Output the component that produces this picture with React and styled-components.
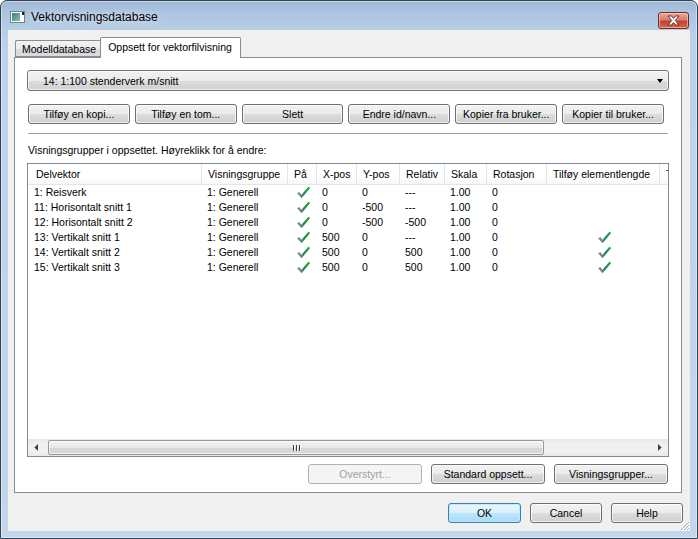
import styled, { createGlobalStyle } from "styled-components";

const GlobalStyle = createGlobalStyle`
  html, body {
    margin: 0;
    padding: 0;
    background: #ffffff;
  }
  body {
    font-family: "Liberation Sans", Arial, sans-serif;
    font-size: 10.5px;
    color: #000;
  }
  * {
    box-sizing: border-box;
  }
`;

const columns = [
  { title: "Delvektor", width: 174 },
  { title: "Visningsgruppe", width: 86 },
  { title: "På", width: 29 },
  { title: "X-pos", width: 40 },
  { title: "Y-pos", width: 43 },
  { title: "Relativ", width: 45 },
  { title: "Skala", width: 42 },
  { title: "Rotasjon", width: 60 },
  { title: "Tilføy elementlengde", width: 113 },
  { title: "T", width: 80 },
];

const rows = [
  ["1: Reisverk", "1: Generell", true, "0", "0", "---", "1.00", "0", false],
  ["11: Horisontalt snitt 1", "1: Generell", true, "0", "-500", "---", "1.00", "0", false],
  ["12: Horisontalt snitt 2", "1: Generell", true, "0", "-500", "-500", "1.00", "0", false],
  ["13: Vertikalt snitt 1", "1: Generell", true, "500", "0", "---", "1.00", "0", true],
  ["14: Vertikalt snitt 2", "1: Generell", true, "500", "0", "500", "1.00", "0", true],
  ["15: Vertikalt snitt 3", "1: Generell", true, "500", "0", "500", "1.00", "0", true],
];

const template = columns.map((c) => `${c.width}px`).join(" ");

const CheckIcon = () => (
  <svg width="15" height="13" viewBox="0 0 15 13">
    <defs>
      <linearGradient id="chk" x1="0" y1="0" x2="1" y2="0">
        <stop offset="0" stopColor="#929292" />
        <stop offset="0.38" stopColor="#6f7f79" />
        <stop offset="0.52" stopColor="#1f8a5a" />
        <stop offset="1" stopColor="#22b22e" />
      </linearGradient>
    </defs>
    <path d="M1 7.2 L3.3 6 L5.4 8.8 L12.4 0.8 L14.2 1.9 L5.6 12.2 Z" fill="url(#chk)" />
  </svg>
);

const WindowIcon = () => (
  <svg width="15" height="13" viewBox="0 0 15 13">
    <defs>
      <linearGradient id="wic" x1="0" y1="0" x2="1" y2="1">
        <stop offset="0" stopColor="#2f7f95" />
        <stop offset="1" stopColor="#8cc69a" />
      </linearGradient>
    </defs>
    <rect x="0.5" y="1.5" width="14" height="11" fill="#fff" stroke="#74808e" />
    <rect x="2" y="3" width="8" height="8" fill="url(#wic)" />
    <rect x="12" y="2" width="2" height="3" fill="#222" />
  </svg>
);

const CloseGlyph = () => (
  <svg width="13" height="11" viewBox="0 0 13 11">
    <path
      d="M1 1 H4.5 L6.5 3.4 L8.5 1 H12 L8.3 5.5 L12 10 H8.5 L6.5 7.6 L4.5 10 H1 L4.7 5.5 Z"
      fill="#ffffff"
      stroke="#5e2019"
      strokeWidth="0.9"
      strokeLinejoin="round"
    />
  </svg>
);

const Grip = () => (
  <svg width="11" height="11" viewBox="0 0 11 11">
    <path d="M10 2 L2 10 M10 5 L5 10 M10 8 L8 10" stroke="#a9adb3" strokeWidth="1" />
    <path d="M11 3 L3 11 M11 6 L6 11 M11 9 L9 11" stroke="#ffffff" strokeWidth="1" />
  </svg>
);

const Arrow = ({ dir }) => (
  <svg width="5" height="7" viewBox="0 0 5 7">
    {dir === "left" ? (
      <path d="M4 0 L0.5 3.5 L4 7 Z" fill="#3c3c3c" />
    ) : (
      <path d="M1 0 L4.5 3.5 L1 7 Z" fill="#3c3c3c" />
    )}
  </svg>
);

export default function App() {
  return (
    <>
      <GlobalStyle />
      <Window>
        <TitleBar>
          <WindowIcon />
          <Title>Vektorvisningsdatabase</Title>
          <CloseButton>
            <CloseGlyph />
          </CloseButton>
        </TitleBar>

        <Client>
          <TabStrip>
            <Tab>Modelldatabase</Tab>
            <Tab $active>Oppsett for vektorfilvisning</Tab>
          </TabStrip>

          <TabPanel>
            <Dropdown>
              <span>14: 1:100 stenderverk m/snitt</span>
              <DropArrow />
            </Dropdown>

            <ButtonRow>
              <Button $grow>Tilføy en kopi...</Button>
              <Button $grow>Tilføy en tom...</Button>
              <Button $grow>Slett</Button>
              <Button $grow>Endre id/navn...</Button>
              <Button $grow>Kopier fra bruker...</Button>
              <Button $grow>Kopier til bruker...</Button>
            </ButtonRow>

            <Separator />

            <Caption>Visningsgrupper i oppsettet. Høyreklikk for å endre:</Caption>

            <ListView>
              <ListViewport>
                <HeaderRow>
                  {columns.map((c, i) => (
                    <HeaderCell key={c.title} $first={i === 0}>
                      {c.title}
                    </HeaderCell>
                  ))}
                </HeaderRow>
                {rows.map((r) => (
                  <Row key={r[0]}>
                    <Cell $first>{r[0]}</Cell>
                    <Cell>{r[1]}</Cell>
                    <IconCell>{r[2] && <CheckIcon />}</IconCell>
                    <Cell>{r[3]}</Cell>
                    <Cell>{r[4]}</Cell>
                    <Cell>{r[5]}</Cell>
                    <Cell>{r[6]}</Cell>
                    <Cell>{r[7]}</Cell>
                    <IconCell>{r[8] && <CheckIcon />}</IconCell>
                    <Cell />
                  </Row>
                ))}
              </ListViewport>
              <HScroll>
                <ScrollArrow>
                  <Arrow dir="left" />
                </ScrollArrow>
                <ScrollTrack>
                  <ScrollThumb>
                    <GripLines>
                      <i />
                      <i />
                      <i />
                    </GripLines>
                  </ScrollThumb>
                </ScrollTrack>
                <ScrollArrow>
                  <Arrow dir="right" />
                </ScrollArrow>
              </HScroll>
            </ListView>

            <PanelFooter>
              <Button $width={114} disabled>
                Overstyrt...
              </Button>
              <Button $width={114}>Standard oppsett...</Button>
              <Button $width={114}>Visningsgrupper...</Button>
            </PanelFooter>
          </TabPanel>

          <DialogFooter>
            <Button $width={73} $default>
              OK
            </Button>
            <Button $width={72}>Cancel</Button>
            <Button $width={72}>Help</Button>
          </DialogFooter>

          <ResizeGrip>
            <Grip />
          </ResizeGrip>
        </Client>
      </Window>
    </>
  );
}

const Window = styled.div`
  width: 698px;
  height: 539px;
  display: flex;
  flex-direction: column;
  padding: 0 7px 7px 7px;
  border: 1px solid #34404e;
  border-radius: 7px 7px 0 0;
  background: linear-gradient(
    180deg,
    #9db8d6 0px,
    #aec6e1 14px,
    #bcd2ea 40px,
    #c2d7ed 100%
  );
  box-shadow: inset 0 0 0 1px rgba(255, 255, 255, 0.45);
`;

const TitleBar = styled.div`
  height: 29px;
  display: flex;
  align-items: center;
  padding: 2px 0 0 2px;
  gap: 6px;
`;

const Title = styled.div`
  flex: 1;
  font-family: "Liberation Sans", Arial, sans-serif;
  font-size: 12px;
  color: #000;
  text-shadow: 0 0 6px rgba(255, 255, 255, 0.9);
  padding-top: 1px;
`;

const CloseButton = styled.div`
  align-self: flex-start;
  margin-top: 9px;
  margin-right: 1px;
  width: 31px;
  height: 17px;
  display: flex;
  align-items: center;
  justify-content: center;
  border: 1px solid #6f2a21;
  border-radius: 3px;
  background: linear-gradient(
    180deg,
    #e8a99c 0%,
    #d77f6f 45%,
    #c4432f 55%,
    #d6664f 100%
  );
  box-shadow: inset 0 0 0 1px rgba(255, 220, 210, 0.55);
`;

const Client = styled.div`
  position: relative;
  flex: 1;
  display: flex;
  flex-direction: column;
  background: #f0f0f0;
  padding: 7px 8px 0 6px;
`;

const TabStrip = styled.div`
  height: 20px;
  display: flex;
  align-items: flex-end;
`;

const Tab = styled.div`
  position: relative;
  z-index: ${(p) => (p.$active ? 2 : 1)};
  height: ${(p) => (p.$active ? "21px" : "17px")};
  margin-bottom: ${(p) => (p.$active ? "-1px" : "0")};
  margin-left: ${(p) => (p.$active ? "-1px" : "1px")};
  padding: ${(p) => (p.$active ? "3px 8px 0 7px" : "2px 5px 0 6px")};
  border: 1px solid #898c95;
  border-bottom: ${(p) => (p.$active ? "none" : "1px solid #898c95")};
  border-right: ${(p) => (p.$active ? "1px solid #898c95" : "none")};
  border-radius: 2px 2px 0 0;
  background: ${(p) =>
    p.$active ? "#ffffff" : "linear-gradient(180deg, #f3f3f3 0%, #ebebeb 50%, #dcdcdc 51%, #d9d9d9 100%)"};
  white-space: nowrap;
  font-size: 10.5px;
`;

const TabPanel = styled.div`
  height: 436px;
  display: flex;
  flex-direction: column;
  background: #ffffff;
  border: 1px solid #898c95;
  padding: 12px 12px 5px 12px;
`;

const Dropdown = styled.div`
  height: 21px;
  display: flex;
  align-items: center;
  justify-content: space-between;
  padding: 0 4px 0 15px;
  border: 1px solid #707070;
  border-radius: 3px;
  background: linear-gradient(
    180deg,
    #f2f2f2 0%,
    #ebebeb 50%,
    #dddddd 51%,
    #cfcfcf 100%
  );
  box-shadow: inset 0 0 0 1px rgba(255, 255, 255, 0.7);
`;

const DropArrow = styled.span`
  width: 0;
  height: 0;
  border-left: 3.5px solid transparent;
  border-right: 3.5px solid transparent;
  border-top: 4px solid #000;
  margin-right: 1px;
`;

const ButtonRow = styled.div`
  display: flex;
  gap: 5px;
  margin: 13px 5px 0 1px;
`;

const Button = styled.button`
  flex: ${(p) => (p.$grow ? "1 1 0" : "none")};
  width: ${(p) => (p.$width ? `${p.$width}px` : "auto")};
  height: 20px;
  padding: 0 2px;
  font-family: "Liberation Sans", Arial, sans-serif;
  font-size: 10.5px;
  color: #000;
  white-space: nowrap;
  border: 1px solid ${(p) => (p.$default ? "#3c7fb1" : "#707070")};
  border-radius: 3px;
  background: ${(p) =>
    p.$default
      ? "linear-gradient(180deg, #eaf6fd 0%, #d9f0fc 50%, #bee6fd 51%, #a7d9f5 100%)"
      : "linear-gradient(180deg, #f2f2f2 0%, #ebebeb 50%, #dddddd 51%, #cfcfcf 100%)"};
  box-shadow: inset 0 0 0 1px
    ${(p) => (p.$default ? "rgba(190, 232, 253, 0.9)" : "rgba(255, 255, 255, 0.7)")};

  &:disabled {
    color: #a0a0a0;
    border-color: #adb2b5;
    background: #f4f4f4;
    box-shadow: none;
  }
`;

const Separator = styled.div`
  height: 1px;
  margin: 9px 1px 0 1px;
  background: #a0a0a0;
`;

const Caption = styled.div`
  margin: 10px 0 0 1px;
  height: 13px;
  line-height: 13px;
`;

const ListView = styled.div`
  margin-top: 6px;
  height: 294px;
  display: flex;
  flex-direction: column;
  border: 1px solid #828790;
  background: #ffffff;
`;

const ListViewport = styled.div`
  flex: 1;
  overflow: hidden;
`;

const HeaderRow = styled.div`
  display: grid;
  grid-template-columns: ${template};
  height: 21px;
  border-bottom: 1px solid #e5e5e5;
  background: linear-gradient(180deg, #ffffff 0%, #ffffff 60%, #f6f7f8 100%);
`;

const HeaderCell = styled.div`
  display: flex;
  align-items: center;
  padding-left: ${(p) => (p.$first ? "8px" : "6px")};
  border-right: 1px solid #e3e5e8;
  white-space: nowrap;
  overflow: hidden;
`;

const Row = styled.div`
  display: grid;
  grid-template-columns: ${template};
  height: 15px;
  line-height: 15px;
`;

const Cell = styled.div`
  padding-left: ${(p) => (p.$first ? "6px" : "5px")};
  white-space: nowrap;
  overflow: hidden;
`;

const IconCell = styled.div`
  display: flex;
  align-items: center;
  justify-content: center;
  padding-left: 2px;
`;

const HScroll = styled.div`
  height: 17px;
  display: flex;
  background: linear-gradient(180deg, #e6e6e6 0%, #f0f0f0 25%, #f0f0f0 75%, #e8e8e8 100%);
`;

const ScrollArrow = styled.div`
  width: 17px;
  display: flex;
  align-items: center;
  justify-content: center;
`;

const ScrollTrack = styled.div`
  flex: 1;
  display: flex;
  align-items: center;
  padding-left: 3px;
`;

const ScrollThumb = styled.div`
  width: 496px;
  height: 15px;
  display: flex;
  align-items: center;
  justify-content: center;
  border: 1px solid #979797;
  border-radius: 2px;
  background: linear-gradient(180deg, #f3f3f3 0%, #e8e8e8 50%, #d6d6d6 51%, #d9d9d9 100%);
  box-shadow: inset 0 0 0 1px rgba(255, 255, 255, 0.6);
`;

const GripLines = styled.div`
  display: flex;
  gap: 2px;

  i {
    display: block;
    width: 1px;
    height: 6px;
    background: #3d3d3d;
    box-shadow: 1px 0 0 #ffffff;
  }
`;

const PanelFooter = styled.div`
  display: flex;
  justify-content: flex-end;
  gap: 9px;
  margin: 7px 1px 0 0;
`;

const DialogFooter = styled.div`
  display: flex;
  justify-content: flex-end;
  gap: 9px;
  margin: 10px -1px 0 0;
`;

const ResizeGrip = styled.div`
  position: absolute;
  right: 0;
  bottom: 0;
  width: 11px;
  height: 11px;
  display: flex;
`;
